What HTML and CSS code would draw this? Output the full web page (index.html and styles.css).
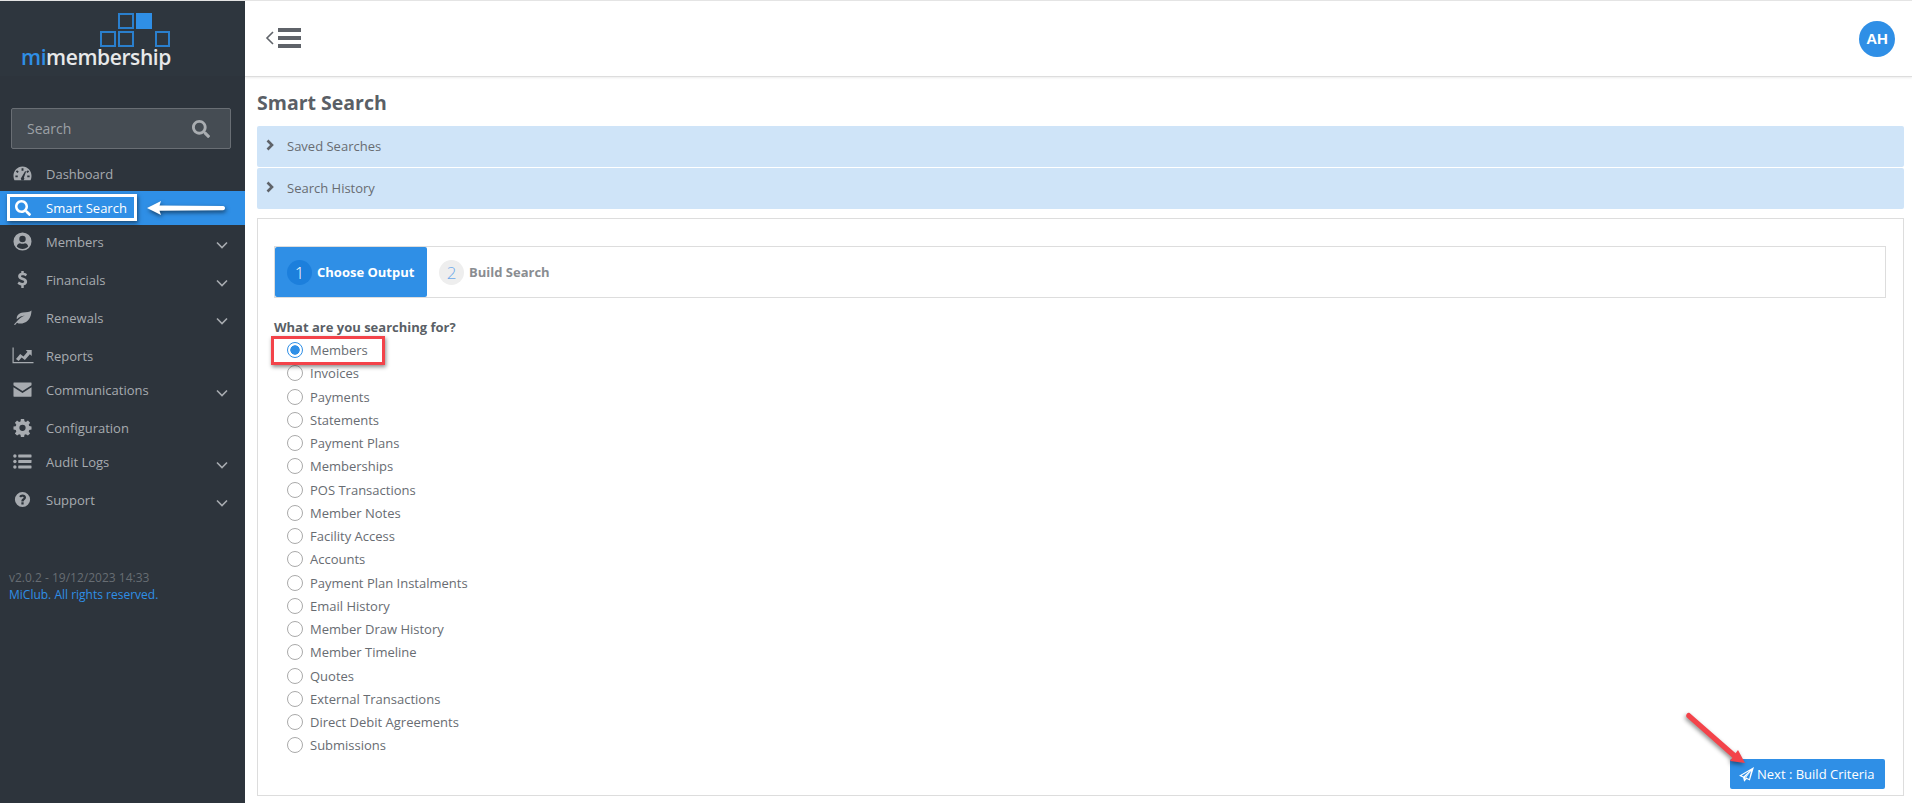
FILE: index.html
```html
<!DOCTYPE html>
<html lang="en">
<head>
    <meta charset="UTF-8">
    <title>Smart Search - mimembership</title>
    <link rel="stylesheet" href="styles.css">
</head>
<body>
    <aside class="sidebar">
        <div class="logo">
            <div class="logo-squares">
                <span class="sq sq-a"></span>
                <span class="sq sq-b sq-full"></span>
                <span class="sq sq-c"></span>
                <span class="sq sq-a"></span>
                <span class="sq sq-d"></span>
            </div>
            <div class="logo-text"><b>mi</b>membership</div>
        </div>

        <div class="side-search">
            <span>Search</span>
            <svg class="side-search-icon" viewBox="0 0 512 512"><path d="M505 442.7L405.3 343c-4.5-4.5-10.6-7-17-7H372c27.6-35.3 44-79.7 44-128C416 93.1 322.9 0 208 0S0 93.1 0 208s93.1 208 208 208c48.3 0 92.7-16.4 128-44v16.3c0 6.4 2.5 12.5 7 17l99.7 99.7c9.4 9.4 24.6 9.4 33.9 0l28.3-28.3c9.4-9.4 9.4-24.6.1-34zM208 336c-70.7 0-128-57.2-128-128 0-70.7 57.2-128 128-128 70.7 0 128 57.2 128 128 0 70.7-57.2 128-128 128z"/></svg>
        </div>

        <nav class="nav">
            <a class="nav-item">
                <svg class="nav-icon" viewBox="0 0 20 16"><path fill-rule="evenodd" d="M10 0.5C4.5 0.5 0.5 5 0.5 10.5c0 1.6 0.4 3.1 1 4.5h17c0.6-1.4 1-2.9 1-4.5C19.5 5 15.5 0.5 10 0.5zM9 2.5h2V5H9zM4.3 4.5l1.8 1.7-1.4 1.4L3 5.9zM15.7 4.5L17 5.9l-1.7 1.7-1.4-1.4zM2.5 10H5v2H2.5zM15 10h2.5v2H15zM12.7 5.5l1.1 0.5-2.3 6.3a1.8 1.8 0 1 1-2.5-0.3z"/></svg>
                <span>Dashboard</span>
            </a>
            <a class="nav-item active">
                <svg class="nav-icon" viewBox="0 0 512 512"><path d="M505 442.7L405.3 343c-4.5-4.5-10.6-7-17-7H372c27.6-35.3 44-79.7 44-128C416 93.1 322.9 0 208 0S0 93.1 0 208s93.1 208 208 208c48.3 0 92.7-16.4 128-44v16.3c0 6.4 2.5 12.5 7 17l99.7 99.7c9.4 9.4 24.6 9.4 33.9 0l28.3-28.3c9.4-9.4 9.4-24.6.1-34zM208 336c-70.7 0-128-57.2-128-128 0-70.7 57.2-128 128-128 70.7 0 128 57.2 128 128 0 70.7-57.2 128-128 128z"/></svg>
                <span>Smart Search</span>
            </a>
            <a class="nav-item tall">
                <svg class="nav-icon" viewBox="0 0 20 20"><path fill-rule="evenodd" d="M10 0.5a9.5 9.5 0 1 0 0 19 9.5 9.5 0 0 0 0-19zM10 4a3.4 3.4 0 1 1 0 6.8A3.4 3.4 0 0 1 10 4zM4 15.2c0.5-2.4 2-3.4 3.4-3.4 1.6 0.9 3.6 0.9 5.2 0 1.4 0 2.9 1 3.4 3.4-1.5 1.7-3.6 2.6-6 2.6s-4.5-0.9-6-2.6z"/></svg>
                <span>Members</span>
                <svg class="nav-chev" viewBox="0 0 12 8"><path d="M1 1.5l5 5 5-5"/></svg>
            </a>
            <a class="nav-item tall">
                <svg class="nav-icon" viewBox="0 0 20 20"><path d="M11.3 1v2c1.5 0.2 2.8 0.8 3.5 1.4l-1.3 2.2c-0.9-0.6-2.1-1.1-3.3-1.1-1.3 0-1.8 0.5-1.8 1.1 0 1.8 6.5 1.3 6.5 5.7 0 1.9-1.3 3.4-3.6 3.8V19H8.7v-2.8c-1.6-0.2-3-0.9-4-1.8l1.5-2.2c1 0.8 2.4 1.4 3.6 1.4 1.4 0 2-0.5 2-1.2 0-2-6.4-1.4-6.4-5.7 0-1.9 1.3-3.3 3.3-3.7V1z"/></svg>
                <span>Financials</span>
                <svg class="nav-chev" viewBox="0 0 12 8"><path d="M1 1.5l5 5 5-5"/></svg>
            </a>
            <a class="nav-item tall">
                <svg class="nav-icon" viewBox="0 0 20 16"><path d="M19.5 0.5c-2 2-5 1.8-9 2.2C6 3.2 3.5 6 4 9.8c2.5-2.5 5.5-3.7 8.5-4-3 1-6.5 3.3-10 8l-1.5 1.5 1.2 0.5 2-2.4c1.5 1 3.5 1.3 5.5 0.8 6-1.5 9.5-6 9.8-13.7z"/></svg>
                <span>Renewals</span>
                <svg class="nav-chev" viewBox="0 0 12 8"><path d="M1 1.5l5 5 5-5"/></svg>
            </a>
            <a class="nav-item">
                <svg class="nav-icon nav-icon-wide" viewBox="0 0 22 16"><path d="M0.5 0h1.2v14.5h19.8v1.2H0.5zM4 11.5l4.2-5 3.3 2.500 4-4.700-1.800-1.800h6v6l-1.800-1.800-5 5.800-3.300-2.500-3 3.500z"/></svg>
                <span>Reports</span>
            </a>
            <a class="nav-item tall">
                <svg class="nav-icon" viewBox="0 0 20 16"><path d="M1 0.5h18c0.3 0 0.5 0.2 0.5 0.5v2.4L10 9.5 0.5 3.4V1c0-0.3 0.2-0.5 0.5-0.5zM0.5 5.5L10 11.6l9.5-6.1V15c0 0.3-0.2 0.5-0.5 0.5H1c-0.3 0-0.5-0.2-0.5-0.5z"/></svg>
                <span>Communications</span>
                <svg class="nav-chev" viewBox="0 0 12 8"><path d="M1 1.5l5 5 5-5"/></svg>
            </a>
            <a class="nav-item">
                <svg class="nav-icon" viewBox="0 0 20 20"><path fill-rule="evenodd" d="M8.3 1h3.4l0.4 2.5 1.5 0.6 2.1-1.5 2.3 2.4-1.5 2 0.6 1.5 2.4 0.4v3.3l-2.4 0.4-0.6 1.5 1.5 2.1-2.3 2.3-2.1-1.5-1.5 0.6-0.4 2.4H8.3l-0.4-2.4-1.5-0.6-2.1 1.5-2.3-2.3 1.5-2.1-0.6-1.5-2.4-0.4V9l2.4-0.4 0.6-1.5-1.5-2 2.3-2.4 2.1 1.5 1.5-0.6zM10 7a3.3 3.3 0 1 0 0 6.6A3.3 3.3 0 0 0 10 7z"/></svg>
                <span>Configuration</span>
            </a>
            <a class="nav-item tall">
                <svg class="nav-icon" viewBox="0 0 20 16"><circle cx="2" cy="2.2" r="1.8"/><circle cx="2" cy="8" r="1.8"/><circle cx="2" cy="13.8" r="1.8"/><rect x="5.5" y="0.6" width="14" height="3.2" rx="0.5"/><rect x="5.5" y="6.4" width="14" height="3.2" rx="0.5"/><rect x="5.5" y="12.2" width="14" height="3.2" rx="0.5"/></svg>
                <span>Audit Logs</span>
                <svg class="nav-chev" viewBox="0 0 12 8"><path d="M1 1.5l5 5 5-5"/></svg>
            </a>
            <a class="nav-item tall">
                <svg class="nav-icon" viewBox="0 0 20 20"><path fill-rule="evenodd" d="M10 2a8 8 0 1 0 0 16 8 8 0 0 0 0-16zM8.8 13h2.4v2.3H8.8zM10 4.800c2 0 3.700 1.300 3.700 3.200 0 2.400-2.500 2.400-2.500 4H8.800c0-2.900 2.400-2.900 2.400-4 0-0.600-0.500-1-1.300-1-0.600 0-1.100 0.400-1.500 1L6.600 6.800C7.300 5.600 8.400 4.800 10 4.800z"/></svg>
                <span>Support</span>
                <svg class="nav-chev" viewBox="0 0 12 8"><path d="M1 1.5l5 5 5-5"/></svg>
            </a>
        </nav>

        <div class="side-foot">
            <div>v2.0.2 - 19/12/2023 14:33</div>
            <a>MiClub. All rights reserved.</a>
        </div>
    </aside>

    <div class="main">
        <header class="topbar">
            <svg class="menu-toggle" viewBox="0 0 36 20"><path class="menu-chev" d="M8 4l-6 6 6 6"/><rect x="13" y="0" width="23" height="4"/><rect x="13" y="8" width="23" height="4"/><rect x="13" y="16" width="23" height="4"/></svg>
            <div class="avatar">AH</div>
        </header>

        <div class="content">
            <h1>Smart Search</h1>

            <div class="acc-row">
                <svg class="acc-chev" viewBox="0 0 8 12"><path d="M1.5 1.5L6 6l-4.500 4.500"/></svg>
                <span>Saved Searches</span>
            </div>
            <div class="acc-row">
                <svg class="acc-chev" viewBox="0 0 8 12"><path d="M1.5 1.5L6 6l-4.500 4.500"/></svg>
                <span>Search History</span>
            </div>

            <section class="card">
                <div class="steps">
                    <div class="step step-on"><span class="step-num">1</span><b>Choose Output</b></div>
                    <div class="step"><span class="step-num">2</span><b>Build Search</b></div>
                </div>

                <p class="question">What are you searching for?</p>
                <div class="options">
                    <label class="opt"><input type="radio" name="output" checked>Members</label>
                    <label class="opt"><input type="radio" name="output">Invoices</label>
                    <label class="opt"><input type="radio" name="output">Payments</label>
                    <label class="opt"><input type="radio" name="output">Statements</label>
                    <label class="opt"><input type="radio" name="output">Payment Plans</label>
                    <label class="opt"><input type="radio" name="output">Memberships</label>
                    <label class="opt"><input type="radio" name="output">POS Transactions</label>
                    <label class="opt"><input type="radio" name="output">Member Notes</label>
                    <label class="opt"><input type="radio" name="output">Facility Access</label>
                    <label class="opt"><input type="radio" name="output">Accounts</label>
                    <label class="opt"><input type="radio" name="output">Payment Plan Instalments</label>
                    <label class="opt"><input type="radio" name="output">Email History</label>
                    <label class="opt"><input type="radio" name="output">Member Draw History</label>
                    <label class="opt"><input type="radio" name="output">Member Timeline</label>
                    <label class="opt"><input type="radio" name="output">Quotes</label>
                    <label class="opt"><input type="radio" name="output">External Transactions</label>
                    <label class="opt"><input type="radio" name="output">Direct Debit Agreements</label>
                    <label class="opt"><input type="radio" name="output">Submissions</label>
                </div>

                <div class="card-foot">
                    <button class="btn-next" type="button">
                        <svg viewBox="0 0 16 16"><path fill-rule="evenodd" d="M16 0L0 9.3l4.300 1.800L5.500 15.800l2.700-2.900 3.400 1.500zM11.500 4L4.800 10 2.700 9.100zM12.800 4.300L10.800 12.700 7.600 11.300zM12.200 4.500L6.300 10.800 6.800 13.300l-0.100-2.300z"/></svg>
                        Next : Build Criteria
                    </button>
                </div>
            </section>
        </div>
    </div>

    <!-- callouts drawn on top of the screenshot -->
    <div class="mark-frame"></div>
    <div class="mark-red"></div>
    <svg class="mark-arrow-white" viewBox="0 0 84 20"><path d="M3 10L17 3 15.500 7.500 79 8c1.500 0 2 1 2 2s-0.500 2.300-2 2.300L15.500 12.800 17 17z"/></svg>
    <svg class="mark-arrow-red" viewBox="0 0 70 62"><path d="M3.600 1.100L49.600 41.300 52 38 59 51 44 49 46.400 45.700 0.600 5.200c-1.500-2 1-5.500 3-4.100z"/></svg>
</body>
</html>
```

FILE: styles.css
```css
* {
    box-sizing: border-box;
    margin: 0;
    padding: 0;
}

html, body {
    height: 803px;
    overflow: hidden;
}

body {
    display: flex;
    font-family: "Open Sans", Arial, sans-serif;
    font-size: 13px;
    color: #686c72;
    background-color: #fff;
    border-top: 1px solid #e4e4e4;
}

/* sidebar */
.sidebar {
    width: 245px;
    height: 802px;
    flex-shrink: 0;
    background-color: #2d343c;
    color: #a7abb0;
}

.logo {
    height: 75px;
    padding-top: 12px;
    background-color: #2e363e;
}

.logo-squares {
    display: grid;
    grid-template-columns: repeat(4, 16px);
    grid-template-rows: 16px 16px;
    gap: 2px;
    margin-left: 100px;
}

.sq {
    border: 2px solid #2a7fcd;
}

.sq-full {
    background-color: #2f8fe6;
    border-color: #2f8fe6;
}

.sq-a {
    grid-column: 2;
}

.sq-b {
    grid-column: 3;
}

.sq-c {
    grid-column: 1;
}

.sq-d {
    grid-column: 4;
    margin-left: 1px;
}

.logo-text {
    margin: -3px 0 0 21px;
    font-size: 21px;
    font-weight: 600;
    line-height: 26px;
    letter-spacing: -0.4px;
    color: #e8e9ea;
}

.logo-text b {
    font-weight: 600;
    color: #2f8fe6;
}

.side-search {
    display: flex;
    align-items: center;
    justify-content: space-between;
    width: 220px;
    height: 41px;
    margin: 32px 0 8px 11px;
    padding: 0 20px 0 15px;
    background-color: #454c53;
    border: 1px solid #696e74;
    border-radius: 2px;
    font-size: 14px;
    color: #9da1a6;
}

.side-search-icon {
    width: 18px;
    height: 18px;
    fill: #a9adb1;
}

.nav-item {
    display: flex;
    align-items: center;
    height: 34px;
    padding: 0 17px 0 46px;
    position: relative;
}

.nav-item.tall {
    height: 38px;
    padding-bottom: 4px;
}

.nav-item.active {
    background-color: #2f8fe6;
    color: #fff;
}

.nav-icon {
    position: absolute;
    left: 13px;
    top: 7px;
    width: 19px;
    height: 19px;
    fill: #a7abb0;
}

.nav-icon-wide {
    left: 12px;
    width: 22px;
}

.active .nav-icon {
    left: 15px;
    top: 9px;
    width: 16px;
    height: 16px;
    fill: #fff;
}

.nav-chev {
    width: 12px;
    height: 8px;
    margin: 6px 0 0 auto;
    fill: none;
    stroke: #a7abb0;
    stroke-width: 1.6;
}

.side-foot {
    margin: 48px 0 0 9px;
    font-size: 12px;
    line-height: 17px;
    color: #676d73;
}

.side-foot a {
    color: #2f8fe6;
}

/* main column */
.main {
    flex: 1;
    min-width: 0;
}

.topbar {
    display: flex;
    align-items: center;
    justify-content: space-between;
    height: 76px;
    padding: 0 17px 0 20px;
    border-bottom: 1px solid #ddd;
    box-shadow: 0 1px 2px rgba(0,0,0,0.08);
}

.menu-toggle {
    width: 36px;
    height: 20px;
    margin-bottom: 2px;
    fill: #5f6369;
}

.menu-chev {
    fill: none;
    stroke: #5f6369;
    stroke-width: 1.6;
}

.avatar {
    display: flex;
    align-items: center;
    justify-content: center;
    width: 36px;
    height: 36px;
    border-radius: 50%;
    background-color: #2f8fe6;
    color: #fff;
    font-family: "Liberation Sans", Arial, sans-serif;
    font-size: 15px;
    font-weight: bold;
}

.content {
    padding: 0 8px 0 12px;
}

h1 {
    height: 49px;
    padding-top: 12px;
    font-size: 19.5px;
    line-height: 27px;
    font-weight: bold;
    color: #5a5f66;
}

.acc-row {
    display: flex;
    align-items: center;
    height: 41px;
    margin-bottom: 1px;
    padding: 0 0 2px 9px;
    background-color: #cfe4f8;
    border-radius: 2px;
}

.acc-chev {
    width: 8px;
    height: 12px;
    margin: -2px 13px 0 0;
    fill: none;
    stroke: #5f6369;
    stroke-width: 2.6;
}

.card {
    height: 578px;
    margin-top: 9px;
    padding: 27px 17px 0 16px;
    border: 1px solid #ddd;
    position: relative;
}

.steps {
    display: flex;
    height: 52px;
    border: 1px solid #ddd;
}

.step {
    display: flex;
    align-items: center;
    gap: 5px;
    padding: 0 12px;
    color: #8a8d91;
}

.step-on {
    width: 152px;
    background-color: #2f8fe6;
    border-radius: 2px;
    color: #fff;
}

.step-num {
    display: flex;
    align-items: center;
    justify-content: center;
    width: 25px;
    height: 25px;
    border-radius: 50%;
    background-color: #eee;
    color: #6ba9ea;
    font-size: 17px;
    font-weight: 300;
}

.step-on .step-num {
    background-color: #1c7fdc;
    color: #fff;
}

.question {
    margin-top: 20px;
    font-weight: bold;
    line-height: 18px;
    color: #5a5f66;
}

.options {
    margin-top: 2.5px;
}

.opt {
    display: flex;
    align-items: center;
    height: 23.25px;
    padding-left: 13px;
}

.opt input {
    appearance: none;
    width: 16px;
    height: 16px;
    margin-right: 7px;
    border: 1px solid #aaa;
    border-radius: 50%;
    background-color: #fff;
}

.opt input:checked {
    border-color: #2f8fe6;
    background: radial-gradient(circle, #2f8fe6 0, #2f8fe6 4.4px, #fff 5px);
}

.card-foot {
    position: absolute;
    right: 18px;
    bottom: 6px;
}

.btn-next {
    display: flex;
    align-items: center;
    gap: 3px;
    width: 155px;
    height: 30px;
    padding-left: 9px;
    border: 0;
    border-radius: 2px;
    background-color: #2f8fe6;
    color: #fff;
    font-family: inherit;
    font-size: 13px;
}

.btn-next svg {
    width: 15px;
    height: 15px;
    fill: #fff;
}

/* callouts */
.mark-frame {
    position: absolute;
    left: 7px;
    top: 194px;
    width: 130px;
    height: 27px;
    border: 3px solid #fff;
    box-shadow: 1px 2px 4px rgba(0,0,0,0.5);
}

.mark-red {
    position: absolute;
    left: 271px;
    top: 336px;
    width: 114px;
    height: 29px;
    border: 3px solid #f3434a;
    box-shadow: 1px 2px 4px rgba(0,0,0,0.45);
}

.mark-arrow-white {
    position: absolute;
    left: 144px;
    top: 198px;
    width: 84px;
    height: 20px;
    fill: #fff;
    filter: drop-shadow(1px 2px 2px rgba(0,0,0,0.55));
}

.mark-arrow-red {
    position: absolute;
    left: 1686px;
    top: 712px;
    width: 70px;
    height: 62px;
    fill: #f3434a;
    filter: drop-shadow(-1px 2px 2px rgba(0,0,0,0.45));
}
```
